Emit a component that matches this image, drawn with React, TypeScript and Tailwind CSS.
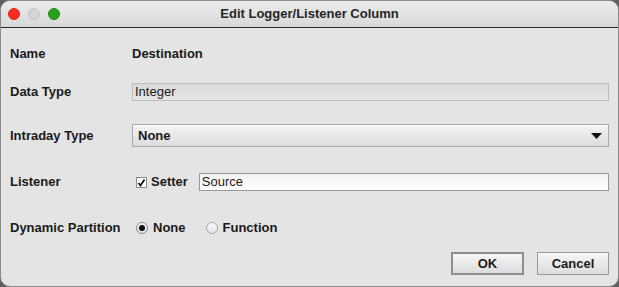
import React from "react";

const font = { fontFamily: '"Liberation Sans", Arial, sans-serif' };

function Label({ children }: { children: React.ReactNode }) {
  return (
    <div className="w-[122px] shrink-0 text-[13px] font-bold text-[#1a1a1a] whitespace-nowrap">
      {children}
    </div>
  );
}

export default function App() {
  return (
    <div className="w-[619px] h-[287px] bg-[#5e5e5e]" style={font}>
      <div className="w-full h-full rounded-[10px] bg-[#e4e4e4] overflow-hidden border border-[#8a8a8a] flex flex-col">
        {/* Title bar */}
        <div className="relative h-[27px] shrink-0 border-b border-[#2a2a2a] bg-gradient-to-b from-[#ececec] to-[#d8d8d8] flex items-center justify-center">
          <div className="absolute left-[7px] top-[7px] flex gap-[8px]">
            <span className="w-[12px] h-[12px] rounded-full bg-[#fc2b1f] border border-[#e0231a]" />
            <span className="w-[12px] h-[12px] rounded-full bg-[#d4d4d4] border border-[#c4c4c4]" />
            <span className="w-[12px] h-[12px] rounded-full bg-[#27a11b] border border-[#1f8a15]" />
          </div>
          <span className="text-[13px] font-bold text-[#262626]">
            Edit Logger/Listener Column
          </span>
        </div>

        {/* Body */}
        <div className="flex flex-col pl-[9px] pr-[9px]">
          <div className="mt-[16px] h-[20px] flex items-center">
            <Label>Name</Label>
            <span className="text-[13px] font-bold text-[#1a1a1a]">Destination</span>
          </div>

          <div className="mt-[19px] h-[18px] flex items-center">
            <Label>Data Type</Label>
            <div className="flex-1 h-[18px] border border-[#bcbcbc] bg-gradient-to-b from-[#dadada] to-[#e6e6e6] flex items-center px-[2px] text-[13px] text-[#1a1a1a]">
              Integer
            </div>
          </div>

          <div className="mt-[23px] h-[23px] flex items-center">
            <Label>Intraday Type</Label>
            <div className="flex-1 h-[23px] border border-[#a8a8a8] bg-gradient-to-b from-[#f4f4f4] to-[#dcdcdc] flex items-center justify-between pl-[5px] pr-[6px] shadow-[inset_0_1px_0_#ffffff]">
              <span className="text-[13px] font-bold text-[#1a1a1a]">None</span>
              <svg width="11" height="6" viewBox="0 0 11 6">
                <path d="M0 0 H11 L5.5 6 Z" fill="#111" />
              </svg>
            </div>
          </div>

          <div className="mt-[26px] h-[18px] flex items-center">
            <Label>Listener</Label>
            <div className="ml-[4px] w-[11px] h-[11px] border border-[#8c8c8c] bg-white flex items-center justify-center">
              <svg width="9" height="9" viewBox="0 0 9 9">
                <path d="M1.5 5 L3.5 7.5 L7.5 1.5" stroke="#111" strokeWidth="1.8" fill="none" />
              </svg>
            </div>
            <span className="ml-[4px] text-[13px] font-bold text-[#1a1a1a]">Setter</span>
            <div className="ml-[11px] flex-1 h-[18px] border border-[#9a9a9a] bg-gradient-to-b from-[#f2f2f2] to-white flex items-center px-[2px] text-[13px] text-[#1a1a1a]">
              Source
            </div>
          </div>

          <div className="mt-[27px] h-[20px] flex items-center">
            <Label>Dynamic Partition</Label>
            <div className="ml-[4px] w-[12px] h-[12px] rounded-full border border-[#8c8c8c] bg-gradient-to-b from-[#f8f8f8] to-[#dedede] flex items-center justify-center">
              <span className="w-[6px] h-[6px] rounded-full bg-[#111]" />
            </div>
            <span className="ml-[5px] text-[13px] font-bold text-[#1a1a1a]">None</span>
            <div className="ml-[20px] w-[12px] h-[12px] rounded-full border border-[#a8a8a8] bg-gradient-to-b from-[#fafafa] to-[#e4e4e4]" />
            <span className="ml-[5px] text-[13px] font-bold text-[#1a1a1a]">Function</span>
          </div>

          <div className="mt-[14px] h-[23px] flex justify-end gap-[13px]">
            <button className="w-[73px] h-[23px] border-2 border-[#8e8e8e] bg-gradient-to-b from-[#f6f6f6] to-[#dcdcdc] text-[13px] font-bold text-[#1a1a1a]">
              OK
            </button>
            <button className="w-[72px] h-[23px] border border-[#9a9a9a] bg-gradient-to-b from-[#f6f6f6] to-[#dcdcdc] text-[13px] font-bold text-[#1a1a1a]">
              Cancel
            </button>
          </div>
        </div>
      </div>
    </div>
  );
}
